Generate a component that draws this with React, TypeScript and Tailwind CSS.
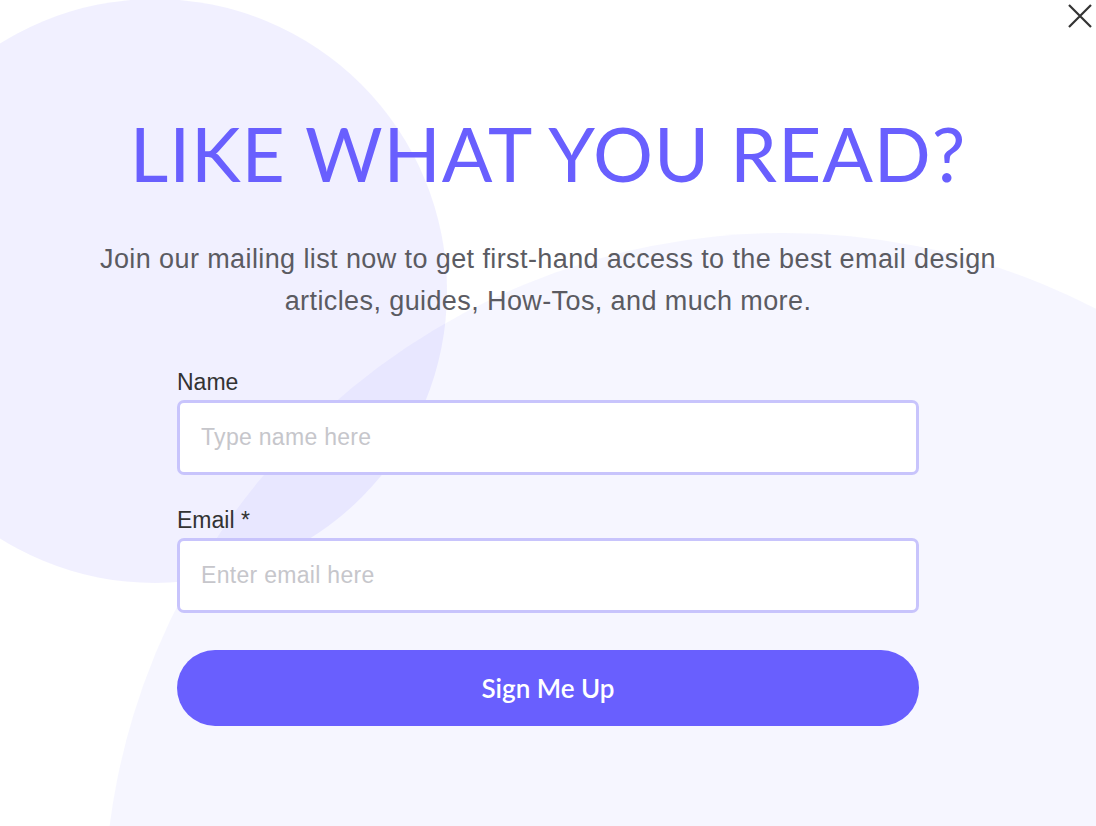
import React from "react";

export default function App() {
  return (
    <div className="relative w-[1096px] h-[826px] overflow-hidden bg-white">
      {/* decorative background shapes */}
      <svg className="absolute inset-0" width="1096" height="826" viewBox="0 0 1096 826">
        <circle cx="155" cy="291" r="292" fill="#6a5fff" fillOpacity="0.095" />
        <circle cx="784" cy="913" r="680" fill="#6a5fff" fillOpacity="0.06" />
      </svg>

      {/* close button */}
      <button className="absolute right-[4px] top-[4px] w-[24px] h-[24px] flex items-center justify-center">
        <svg width="24" height="24" viewBox="0 0 24 24" fill="none">
          <path d="M1 1L23 23M23 1L1 23" stroke="#333333" strokeWidth="2.2" strokeLinecap="butt" />
        </svg>
      </button>

      <div className="relative flex flex-col items-center">
        <h1
          className="mt-[116px] text-[75px] leading-[75px] font-normal text-[#695ffe] tracking-[0.9px] whitespace-nowrap"
          style={{ fontFamily: "Lato, 'Noto Sans', sans-serif" }}
        >
          LIKE WHAT YOU READ?
        </h1>

        <p
          className="mt-[47px] max-w-[940px] text-center text-[27px] leading-[42px] tracking-[0.4px] text-[#5b5b62]"
          style={{ fontFamily: "'Liberation Sans', Arial, sans-serif" }}
        >
          Join our mailing list now to get first-hand access to the best email design articles, guides, How-Tos, and much more.
        </p>

        <form
          className="mt-[46px] w-[742px] flex flex-col"
          style={{ fontFamily: "'Liberation Sans', Arial, sans-serif" }}
          onSubmit={(e) => e.preventDefault()}
        >
          <label className="text-[23px] leading-[28px] text-[#333333]">Name</label>
          <input
            type="text"
            placeholder="Type name here"
            className="mt-[4px] h-[75px] w-full rounded-[7px] border-[3px] border-[#c8c4fc] bg-white pl-[21px] text-[23px] tracking-[0.3px] text-[#333] placeholder:text-[#c6c6cb] outline-none"
          />

          <label className="mt-[31px] text-[23px] leading-[28px] text-[#333333]">Email *</label>
          <input
            type="email"
            placeholder="Enter email here"
            className="mt-[4px] h-[75px] w-full rounded-[7px] border-[3px] border-[#c8c4fc] bg-white pl-[21px] text-[23px] tracking-[0.3px] text-[#333] placeholder:text-[#c6c6cb] outline-none"
          />

          <button
            type="submit"
            className="mt-[37px] h-[76px] w-full rounded-full bg-[#695ffe] text-white text-[26px] font-semibold"
            style={{ fontFamily: "Lato, 'Open Sans', sans-serif" }}
          >
            Sign Me Up
          </button>
        </form>
      </div>
    </div>
  );
}
